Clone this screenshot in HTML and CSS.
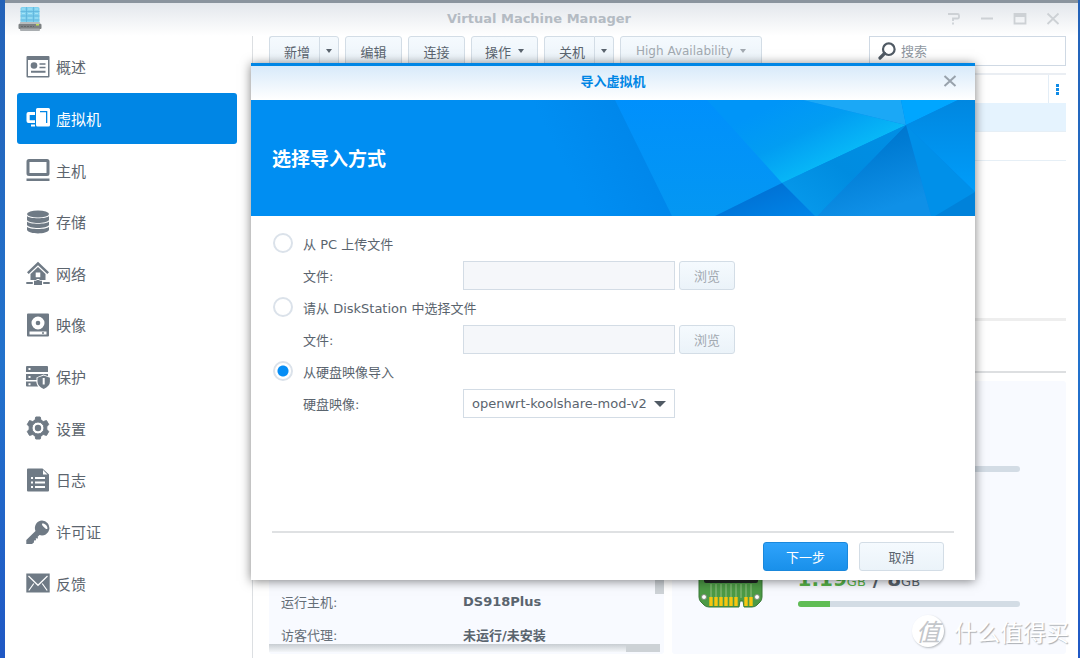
FILE: index.html
```html
<!DOCTYPE html>
<html lang="zh-CN">
<head>
<meta charset="utf-8">
<title>Virtual Machine Manager</title>
<link rel="stylesheet" href="styles.css">
</head>
<body>
<div class="window">
  <header class="titlebar">
    <svg class="app-icon" viewBox="0 0 24 26" width="24" height="26" aria-hidden="true">
      <rect x="2.500" y="1" width="19" height="17" rx="1.500" fill="#7fd0ee"/>
      <path d="M2.500 5.500h19M2.500 10h19M2.500 14h19M8.500 1v16M15.500 1v16" stroke="#5fb4da" stroke-width=".8"/>
      <path d="M4 3h3M10 3h4M17 3h3M4 7.500h3M10 7.500h4M17 7.500h3M4 12h3M10 12h4M17 12h3" stroke="#a5e3f6" stroke-width="1"/>
      <path d="M2.500 16h19l2 3H.5z" fill="#b9bcbd"/>
      <rect x=".5" y="18" width="23" height="5" rx="1" fill="#7d8183"/>
      <rect x="2" y="22.500" width="20" height="2.500" rx="1" fill="#a9adb0"/>
      <path d="M3 20.500h13" stroke="#65696b" stroke-dasharray="2 1"/>
      <rect x="18" y="18" width="3" height="1.500" fill="#bde05a"/>
    </svg>
    <h1 class="title">Virtual Machine Manager</h1>
    <div class="controls">
      <button class="ctl" aria-label="帮助"><svg viewBox="0 0 14 14" width="14" height="14"><path d="M1 2h9.500q1.500 0 1.500 1.500v1.500q0 1.500-1.500 1.500H6v2.500M6 10.500v2" fill="none" stroke="currentColor" stroke-width="1.800"/></svg></button>
      <button class="ctl" aria-label="最小化"><svg viewBox="0 0 14 14" width="14" height="14"><path d="M1 6.500h12" stroke="currentColor" stroke-width="2"/></svg></button>
      <button class="ctl" aria-label="最大化"><svg viewBox="0 0 14 14" width="14" height="14"><path d="M1.500 2h11v9.500h-11zM1.500 4h11" fill="none" stroke="currentColor" stroke-width="1.800"/></svg></button>
      <button class="ctl" aria-label="关闭"><svg viewBox="0 0 14 14" width="14" height="14"><path d="M1.500 1.500l11 10.500M12.500 1.500l-11 10.500" stroke="currentColor" stroke-width="1.800"/></svg></button>
    </div>
  </header>

  <div class="workspace">
    <nav class="sidebar">
      <a class="nav-item" href="#"><svg viewBox="0 0 24 24"><path fill-rule="evenodd" d="M1.500 1h21a1 1 0 0 1 1 1v19.500a1 1 0 0 1-1 1h-21a1 1 0 0 1-1-1V2a1 1 0 0 1 1-1zM2 5v16h20V5z"/><circle cx="8" cy="10.500" r="3.300"/><path d="M13.500 8.200h6v1.600h-6zM13.500 11.700h6v1.600h-6zM5 15.800h14.500v2H5z"/></svg>概述</a>
      <a class="nav-item active" href="#"><svg viewBox="0 0 24 24"><path fill-rule="evenodd" d="M11.500 2h11a1.500 1.500 0 0 1 1.500 1.500V19a1.500 1.500 0 0 1-1.500 1.500h-11A1.500 1.500 0 0 1 10 19V3.500A1.500 1.500 0 0 1 11.500 2zM14 5v1.300h6V17h1.300V5z"/><path d="M9 6H2.500A2 2 0 0 0 .5 8v7a2 2 0 0 0 2 2H9v-2.800H3.700V9H9zM5 18.500h4v2H5z"/></svg>虚拟机</a>
      <a class="nav-item" href="#"><svg viewBox="0 0 24 24"><path fill-rule="evenodd" d="M3 1h18a2.500 2.500 0 0 1 2.500 2.500v12A2.500 2.500 0 0 1 21 18H3a2.500 2.500 0 0 1-2.500-2.500v-12A2.500 2.500 0 0 1 3 1zm.5 3v11h17V4zM.5 20.500h23V23H.5z"/></svg>主机</a>
      <a class="nav-item" href="#"><svg viewBox="0 0 24 24"><ellipse cx="12" cy="4" rx="11" ry="3.600"/><path d="M1 6c2 3 20 3 22 0v4c-2 4-20 4-22 0zM1 11.500c2 3 20 3 22 0v3.500c-2 4-20 4-22 0zM1 16.700c2 3 20 3 22 0V20c-2 4.500-20 4.500-22 0z"/></svg>存储</a>
      <a class="nav-item" href="#"><svg viewBox="0 0 24 24"><path d="M12 .8l11 10.500-1.700 1.700L12 4.300 2.700 13 1 11.300z"/><path fill-rule="evenodd" d="M12 6l7.500 7v6h-15v-6zM9.700 11.500v4.800h4.600v-4.800zM10.500 18h3v1.800h2.500V24H8v-4.200h2.500zM.3 21h6.500v2H.3zM17.200 21h6.500v2h-6.500z"/></svg>网络</a>
      <a class="nav-item" href="#"><svg viewBox="0 0 24 24"><path fill-rule="evenodd" d="M2 .5h20a1 1 0 0 1 1 1v21a1 1 0 0 1-1 1H2a1 1 0 0 1-1-1v-21a1 1 0 0 1 1-1zM12 3.500a6.500 6.500 0 1 0 0 13 6.500 6.500 0 0 0 0-13zM3.500 18.500v3h17v-3z"/><circle cx="12" cy="10" r="2.300"/><path d="M16 19.200h2v1.600h-2z"/></svg>映像</a>
      <a class="nav-item" href="#"><svg viewBox="0 0 24 24"><path fill-rule="evenodd" d="M1 1h20a1 1 0 0 1 1 1v5H0V2a1 1 0 0 1 1-1zm1.500 2v2h2V3zM0 9h22v2.200l-4.500-1.700-7 3V15H0zm2.500 2v2h2v-2zM0 16.500h10.300c.2 2 .8 3.700 2 5H1a1 1 0 0 1-1-1zm2.500 1.700v2h2v-2z"/><path fill-rule="evenodd" d="M17.700 10.500l6.200 2.300v4c0 3-2.200 5.500-6.200 7.200-4-1.700-6.200-4.200-6.200-7.200v-4zM16.700 13v6.500h2V13z"/></svg>保护</a>
      <a class="nav-item" href="#"><svg viewBox="0 0 24 24"><path stroke="#6f7a85" stroke-linejoin="round" fill-rule="evenodd" d="M9.800 1h4.400l.8 3.200 2.300 1.300 3.200-.9 2.200 3.800-1.900 2.300v2.600l1.900 2.300-2.200 3.800-3.200-.9-2.300 1.300-.8 3.200H9.800L9 19.800l-2.300-1.300-3.200.9-2.200-3.800 1.900-2.300v-2.600L1.300 8.400l2.200-3.800 3.200.9L9 4.200zM12 6a6 6 0 1 0 0 12 6 6 0 0 0 0-12z"/><circle cx="12" cy="12" r="3.200"/></svg>设置</a>
      <a class="nav-item" href="#"><svg viewBox="0 0 24 24"><path fill-rule="evenodd" d="M2 .5h14.500L23 6.500v16a1 1 0 0 1-1 1H2a1 1 0 0 1-1-1v-21a1 1 0 0 1 1-1zM17 2v4.500h4.500zM5 9v2h2V9zm4 0v2h10V9zm-4 4.500v2h2v-2zm4 0v2h10v-2zM5 18v2h2v-2zm4 0v2h10v-2z"/></svg>日志</a>
      <a class="nav-item" href="#"><svg viewBox="0 0 24 24"><path fill-rule="evenodd" d="M16 .5a7.500 7.500 0 1 1-2.500 14.600l-1.800 1.700.3 1.700-2.200-.2.200 2-2 .1-.1 2L6 24H.3v-4L9.500 11A7.500 7.500 0 0 1 16 .5zm0 3.200c-1 1 4 6.300 5.300 5.300C22 6.500 19 3 16 3.700z"/></svg>许可证</a>
      <a class="nav-item" href="#"><svg viewBox="0 0 24 24"><path d="M.3 2.500h23.400v19H.3z"/><path d="M2.500 5l9.500 9.300L21.500 5M2.800 19.500l5-7M21.200 19.500l-5-7" fill="none" stroke="#fff" stroke-width="1.200"/></svg>反馈</a>
    </nav>

    <main class="content">
      <div class="toolbar">
        <div class="split"><button class="btn tool">新增</button><button class="btn drop" aria-label="新增选项"><i class="caret"></i></button></div>
        <button class="btn tool">编辑</button>
        <button class="btn tool">连接</button>
        <button class="btn tool menu">操作<i class="caret"></i></button>
        <div class="split"><button class="btn tool">关机</button><button class="btn drop" aria-label="关机选项"><i class="caret"></i></button></div>
        <button class="btn tool menu" disabled>High Availability<i class="caret"></i></button>
        <label class="search">
          <svg viewBox="0 0 18 18" width="18" height="18" aria-hidden="true"><circle cx="10.800" cy="7.200" r="5.800" fill="none" stroke="#505a64" stroke-width="2.200"/><path d="M6.500 11.500L2 16" stroke="#505a64" stroke-width="3.200" stroke-linecap="round"/></svg>
          <input type="search" placeholder="搜索" aria-label="搜索">
        </label>
      </div>
      <div class="vm-list">
        <div class="vm-head"><button class="more" aria-label="列选项"><i></i><i></i><i></i></button></div>
        <div class="vm-row selected"></div>
        <div class="vm-row"></div>
      </div>
      <div class="tabs"></div>
      <div class="details">
        <section class="panel info">
          <dl class="facts">
            <dt>运行主机:</dt><dd>DS918Plus</dd>
            <dt>访客代理:</dt><dd>未运行/未安装</dd>
          </dl>
          <div class="track"></div>
          <i class="vthumb"></i>
        </section>
        <section class="panel usage">
          <div class="meter"><div class="bar"></div></div>
          <div class="meter">
            <svg class="ram" viewBox="0 0 66 60" width="66" height="60" aria-hidden="true">
              <path d="M1 4h63v44q0 3-2 5l-3 3q-2 2-5 2h-8l-1-6h-3l-1 6H11q-3 0-5-2l-3-3q-2-2-2-5z" fill="#4c9a45" stroke="#3b7a38"/>
              <rect x="6" y="10" width="54" height="24" rx="2" fill="#202623"/>
              <path d="M13 35v14M18 35v14M23 35v14M28 35v14M33 35v14M38 35v14M43 35v14M48 35v14M53 35v14" stroke="#91c081"/>
              <path d="M13 48v9M18 48v9M23 48v9M28 48v9M33 48v9M38 48v9M48 48v9M53 48v9" stroke="#f7c60f" stroke-width="3.400"/>
              <circle cx="6" cy="48" r="2.500" fill="#fff" stroke="#7d8b7a"/><circle cx="59" cy="48" r="2.500" fill="#fff" stroke="#7d8b7a"/>
            </svg>
            <div class="reading">
              <p class="amount"><span class="used"><b>1.19</b>GB</span><b>/</b><span><b>8</b>GB</span></p>
              <div class="bar"><div class="fill" style="width:14.5%"></div></div>
            </div>
          </div>
        </section>
      </div>
    </main>
  </div>
</div>

<div class="dialog" role="dialog" aria-labelledby="dialog-title">
  <header class="dialog-head">
    <h2 class="dialog-title" id="dialog-title">导入虚拟机</h2>
    <button class="close" aria-label="关闭"><svg viewBox="0 0 14 14" width="14" height="14"><path d="M1.500 1l11 10M12.500 1l-11 10" stroke="currentColor" stroke-width="2"/></svg></button>
  </header>
  <div class="banner">
    <svg class="facets" viewBox="0 0 724 116" preserveAspectRatio="xMaxYMid slice" aria-hidden="true">
      <defs>
        <linearGradient id="a" gradientUnits="userSpaceOnUse" x1="320" y1="80" x2="400" y2="40"><stop offset="0" stop-color="#008ef2"/><stop offset="1" stop-color="#0086ea"/></linearGradient>
        <linearGradient id="b" x1="0" y1="0" x2="0" y2="1"><stop offset="0" stop-color="#0090fc"/><stop offset="1" stop-color="#0497f2"/></linearGradient>
        <linearGradient id="c" gradientUnits="userSpaceOnUse" x1="550" y1="-10" x2="585" y2="60"><stop offset="0" stop-color="#0095f8"/><stop offset=".5" stop-color="#029df2"/><stop offset="1" stop-color="#08b8f7"/></linearGradient>
        <linearGradient id="d" x1="0" y1="0" x2=".4" y2="1"><stop offset="0" stop-color="#006fc8"/><stop offset=".4" stop-color="#007bd3"/><stop offset="1" stop-color="#0f90e7"/></linearGradient>
        <linearGradient id="e" x1="0" y1="0" x2="1" y2="1"><stop offset="0" stop-color="#0069cd"/><stop offset="1" stop-color="#0085e8"/></linearGradient>
        <linearGradient id="f" x1="0" y1="0" x2="0" y2="1"><stop offset="0" stop-color="#0087e0"/><stop offset="1" stop-color="#009dfa"/></linearGradient>
        <linearGradient id="g" x1="1" y1="0" x2="0" y2="1"><stop offset="0" stop-color="#008fe5"/><stop offset=".5" stop-color="#008ce0"/><stop offset="1" stop-color="#089cee"/></linearGradient>
      </defs>
      <path d="M0 0h724v116H0z" fill="url(#a)"/>
      <path d="M364 0h150l60 116H421z" fill="url(#b)"/>
      <path d="M456 0h96l103 25-124 58z" fill="url(#c)"/>
      <path d="M552 0h98l5 25z" fill="#1ba8f6"/>
      <path d="M650 0h57l-52 25z" fill="#00a6ff"/>
      <path d="M707 0h17v92l-69-67z" fill="url(#f)"/>
      <path d="M655 25l69 67v24h-44z" fill="#0090e9"/>
      <path d="M724 92v24h-40z" fill="#0082da"/>
      <path d="M655 25l25 91H566z" fill="url(#d)"/>
      <path d="M655 25l-89 91h-2l-33-33z" fill="url(#g)"/>
      <path d="M531 83l-67 33h100z" fill="url(#e)"/>
    </svg>
    <h3 class="step">选择导入方式</h3>
  </div>
  <form class="options">
    <input class="radio" type="radio" name="source" id="src-pc"><label class="wide" for="src-pc">从 PC 上传文件</label>
    <label class="sub" for="file-pc">文件:</label><div class="field"><input class="text" type="text" id="file-pc" disabled><button class="btn browse" type="button" disabled>浏览</button></div>
    <input class="radio" type="radio" name="source" id="src-ds"><label class="wide" for="src-ds">请从 DiskStation 中选择文件</label>
    <label class="sub" for="file-ds">文件:</label><div class="field"><input class="text" type="text" id="file-ds" disabled><button class="btn browse" type="button" disabled>浏览</button></div>
    <input class="radio" type="radio" name="source" id="src-image" checked><label class="wide" for="src-image">从硬盘映像导入</label>
    <label class="sub" for="image">硬盘映像:</label><div class="field"><div class="select"><select id="image"><option>openwrt-koolshare-mod-v2</option></select></div></div>
  </form>
  <footer class="dialog-foot">
    <button class="btn action primary">下一步</button>
    <button class="btn action">取消</button>
  </footer>
</div>

<div class="watermark"><span class="seal">值</span>什么值得买</div>
</body>
</html>
```
FILE: styles.css
```css
* { box-sizing: border-box; }

body, h1, h2, h3, p, dl, dd { margin: 0; }

body {
  height: 100vh;
  padding: 0 2px 0 5px;
  overflow: hidden;
  position: relative;
  background: linear-gradient(#2462b8, #2272cc 55%, #2058c4);
  font-family: "DejaVu Sans", "Noto Sans CJK SC", sans-serif;
  font-size: 13px;
  color: #5a646e;
}

button, input, select { font: inherit; color: inherit; margin: 0; }
button { padding: 0; border: 0; background: none; }

.window {
  height: 100%;
  display: flex;
  flex-direction: column;
  background: #fff;
  border-top: 3px solid #8a949e;
}

.titlebar {
  height: 33px;
  flex: none;
  display: grid;
  grid-template-columns: 1fr auto 1fr;
  align-items: center;
  padding: 0 18px 2px 13px;
  background: linear-gradient(#e3e7ec, #fff);
}
.title { font-size: 13px; line-height: 20px; color: #b4bbc3; }
.controls { display: flex; gap: 19px; justify-content: flex-end; color: #cdd1d5; }
.ctl, .close { display: flex; }

.workspace { flex: 1; min-height: 0; display: flex; }

.sidebar {
  width: 248px;
  flex: none;
  display: grid;
  grid-auto-rows: 1fr;
  padding: 5px 15px 49px 12px;
  border-right: 1px solid #dcdfe2;
}
.nav-item {
  display: flex;
  align-items: center;
  gap: 6px;
  padding-left: 9px;
  border-radius: 3px;
  font-size: 15px;
  color: #5c656e;
  text-decoration: none;
}
.nav-item svg { width: 24px; height: 24px; fill: #6f7a85; }
.nav-item.active { background: #0086e5; color: #fff; }
.nav-item.active svg { fill: #fff; }

.content { flex: 1; min-width: 0; display: flex; flex-direction: column; padding: 0 12px 4px 16px; }

.toolbar { display: flex; gap: 6px; height: 30px; }
.btn {
  height: 29px;
  border: 1px solid #d3dde6;
  border-radius: 3px;
  background: linear-gradient(#f5fafe, #ebf3f9);
}
.btn:disabled { color: #a2a9b0; }
.tool { width: 57px; height: 30px; }
.tool.menu { width: auto; padding: 0 13px; display: flex; align-items: center; gap: 7px; }
.tool.menu:disabled { padding: 0 15px; font-size: 12px; }
.split { display: flex; }
.split .tool { width: 50px; padding-left: 5px; border-right: 0; border-radius: 3px 0 0 3px; }
.drop { width: 20px; height: 30px; border-radius: 0 3px 3px 0; display: flex; align-items: center; justify-content: center; }
.caret { border: 3px solid transparent; border-top: 4px solid currentColor; border-bottom: 0; }

.search {
  width: 197px;
  margin-left: auto;
  display: flex;
  align-items: center;
  gap: 5px;
  padding: 0 8px;
  border: 1px solid #cfd9e4;
  background: #fff;
}
.search input { flex: 1; min-width: 0; padding: 0; border: 0; outline: 0; background: none; }
.search input::placeholder { color: #8f979f; opacity: 1; }

.vm-list { height: 245px; margin-top: 7px; border-top: 2px solid #eaeef3; }
.vm-head { height: 28px; display: flex; justify-content: flex-end; }
.more { width: 18px; border-left: 1px solid #e3edf6; display: flex; flex-direction: column; gap: 1px; align-items: center; justify-content: center; }
.more i { width: 3px; height: 3px; background: #0f8be6; }
.vm-row { height: 29px; border-bottom: 1px solid #e6eff6; }
.vm-row.selected { background: #e5f3fe; }

.tabs { height: 55px; border-top: 3px solid #eeeeee; border-bottom: 2px solid #dddfe1; }

.details { flex: 1; min-height: 0; margin-top: 8px; display: grid; grid-template-columns: 1fr 1fr; gap: 8px; }
.panel { position: relative; display: flex; flex-direction: column; justify-content: flex-end; background: #f8faff; border-radius: 3px; }

.facts { display: grid; grid-template-columns: 182px 1fr; grid-auto-rows: 33px; align-items: center; padding-left: 12px; }
.facts dt { color: #656e77; }
.facts dd { font-weight: bold; }
.info { padding-bottom: 1px; }
.track { height: 8px; margin: -7px 4px 1px 0; background: linear-gradient(#c8cdd2, #f4f6f9); }
.track::after { content: ""; display: block; width: 34px; height: 8px; margin-left: auto; background: #cdd2d6; }
.vthumb { position: absolute; right: 0; bottom: 60px; width: 9px; height: 80px; background: #cdd2d6; }

.usage { padding: 0 46px 47px 26px; gap: 77px; }
.meter { display: flex; align-items: flex-end; gap: 34px; }
.meter > .bar { margin-left: 100px; flex: 1; }
.ram { flex: none; margin-bottom: -2px; }
.reading { flex: 1; }
.amount { display: flex; gap: 7px; font-size: 13px; line-height: 26px; margin-bottom: 6px; }
.amount b { font-size: 20px; }
.used { color: #57b449; }
.bar { height: 6px; border-radius: 3px; background: #d3dce5; overflow: hidden; }
.fill { height: 100%; background: #60bd55; }

.dialog {
  position: absolute;
  left: 251px;
  right: 105px;
  top: 63px;
  bottom: 78px;
  display: flex;
  flex-direction: column;
  background: #fff;
  border-top: 3px solid #0086e5;
  box-shadow: 0 1px 10px rgba(0, 0, 0, .5);
}
.dialog-head {
  height: 34px;
  flex: none;
  display: grid;
  grid-template-columns: 1fr auto 1fr;
  align-items: center;
  padding: 0 18px 2px;
  background: linear-gradient(#d8eafa, #fff);
}
.dialog-title { grid-column: 2; font-size: 13px; line-height: 20px; color: #0086e5; }
.close { justify-self: end; color: #98a2ac; }

.banner { position: relative; height: 116px; flex: none; display: flex; align-items: center; padding: 2px 0 0 21px; }
.facets { position: absolute; inset: 0; width: 100%; height: 100%; }
.step { position: relative; font-size: 19px; line-height: 28px; color: #fff; }

.options {
  flex: 1;
  display: grid;
  grid-template-columns: 30px 160px 1fr;
  grid-auto-rows: 32px;
  align-items: center;
  padding: 11px 22px;
}
.wide { grid-column: 2 / 4; }
.sub { grid-column: 2; }
.radio {
  appearance: none;
  width: 20px;
  height: 20px;
  border: 2px solid #dbe2ea;
  border-radius: 50%;
  background: #fff;
}
.radio:checked { background: radial-gradient(circle, #058df5 5px, #fff 6px); }
.field { display: flex; gap: 4px; }
.text, .select { width: 212px; height: 29px; }
.text { padding: 0 8px; border: 1px solid #d3dce5; background: #f5f7fa; }
.browse { width: 56px; }
.select { position: relative; }
.select select { appearance: none; width: 100%; height: 100%; padding: 0 8px; border: 1px solid #d3dce5; border-radius: 0; background: #fff; }
.select::after { content: ""; position: absolute; right: 9px; top: 12px; border: 6px solid transparent; border-top-color: #505a64; border-bottom: 0; pointer-events: none; }

.dialog-foot {
  display: flex;
  justify-content: flex-end;
  gap: 11px;
  margin: 0 21px;
  padding: 9px 10px;
  border-top: 2px solid #dfe1e3;
}
.action { width: 85px; }
.primary { background: linear-gradient(#2fa3fb, #1990ea); border-color: #1a88dc; color: #fff; }

.watermark {
  position: absolute;
  right: 11px;
  bottom: 10px;
  display: flex;
  align-items: center;
  gap: 10px;
  font: 23px/34px "Noto Sans CJK SC", sans-serif;
  color: #fff;
  text-shadow: 1px 1px 1px #a9adb2;
}
.seal {
  width: 32px;
  height: 32px;
  border-radius: 50%;
  background: #fff;
  box-shadow: 1px 1px 2px #b5b9be;
  font-size: 24px;
  font-style: italic;
  line-height: 32px;
  text-align: center;
  color: #c3c6ca;
  text-shadow: none;
}
```
